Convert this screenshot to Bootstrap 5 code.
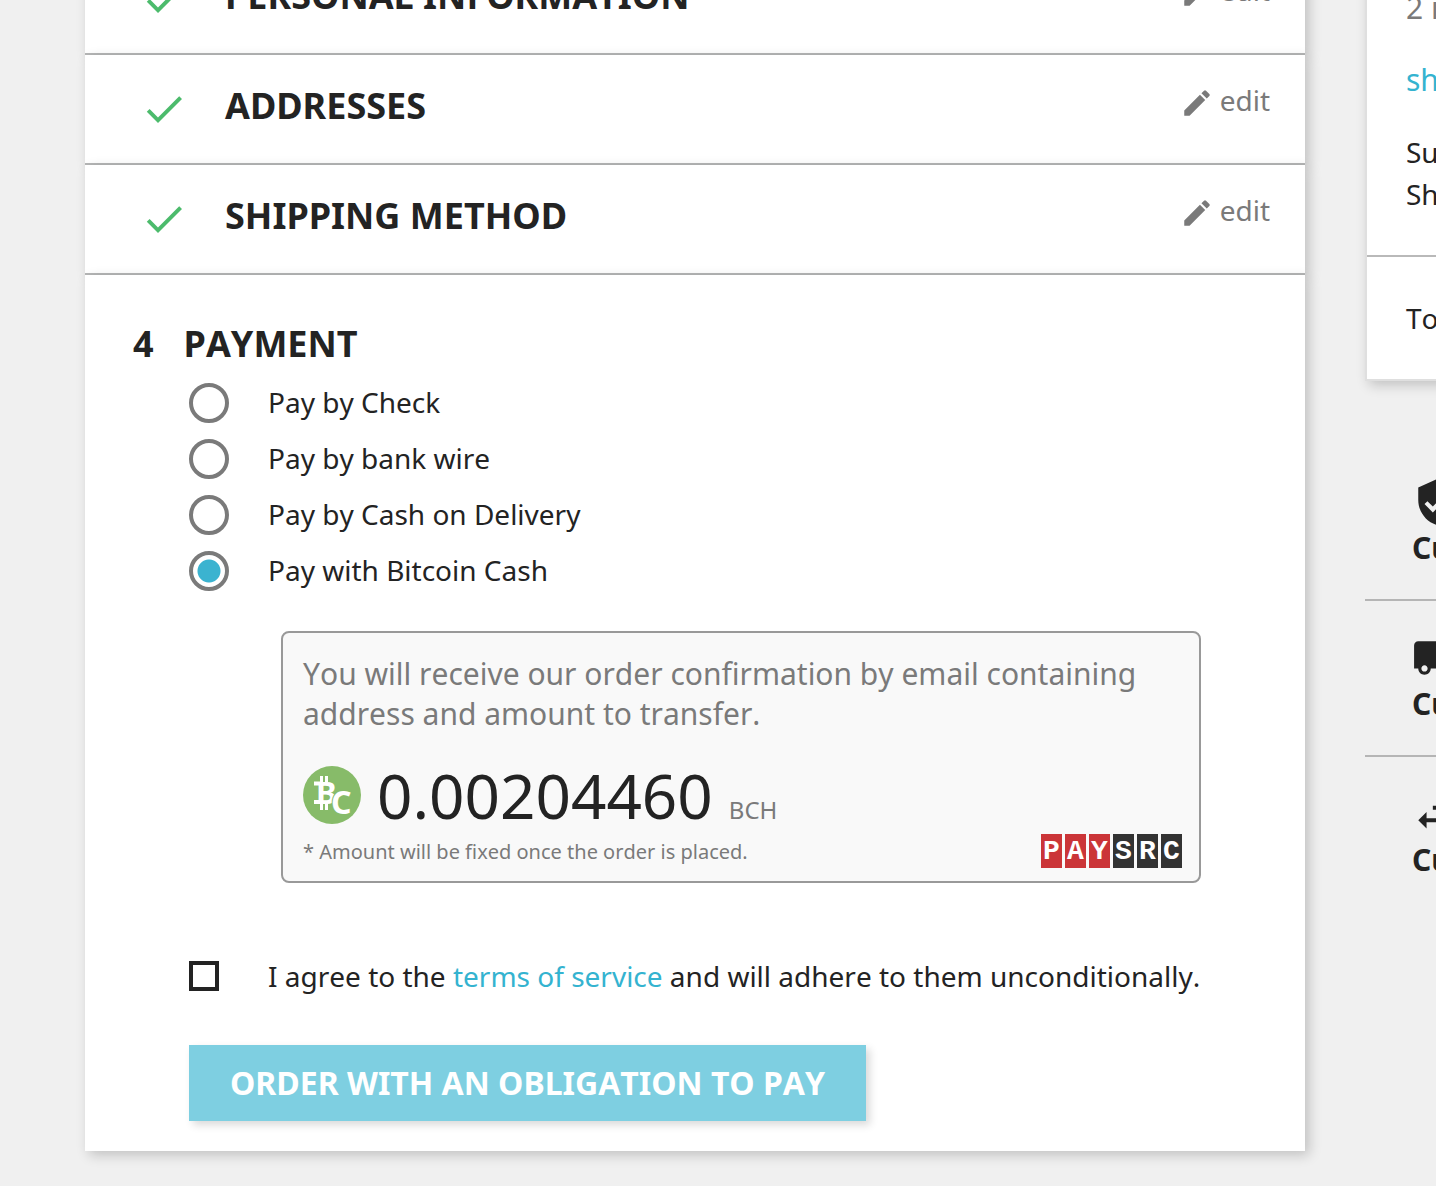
<!DOCTYPE html>
<html lang="en">
<head>
<meta charset="utf-8">
<meta name="viewport" content="width=device-width, initial-scale=1">
<title>Checkout</title>
<link href="https://cdn.jsdelivr.net/npm/bootstrap@5.3.0/dist/css/bootstrap.min.css" rel="stylesheet">
<style>
  body { background: #f0f0f0; color: #232323; font-family: "Noto Sans", sans-serif; font-size: 28px; line-height: 42px; font-kerning: none; overflow-x: hidden; }
  a { color: #34b3d0; text-decoration: none; }
  .checkout { padding-left: 85px; gap: 60px; overflow: hidden; }
  /* the page is scrolled into the first step */
  .checkout > * { margin-top: -55px; }
  .steps { flex: 1 1 0; min-width: 0; padding-bottom: 35px; }
  .step { background: #fff; box-shadow: 4px 4px 12px rgba(0,0,0,.2); }
  .step-done { border-bottom: 2px solid #b5b6b6; padding: 25px 35px 30px 55px; }
  .step-title { font-size: 36px; line-height: 52px; font-weight: 700; margin: 0; }
  .step-done .step-title { margin-left: 37px; }
  .tick { width: 48px; height: 48px; fill: #4cbb6c; margin-top: 5px; flex: none; }
  .edit-link { color: #7a7a7a; line-height: 40px; gap: 6px; }
  .edit-link svg { width: 34px; height: 34px; fill: #7a7a7a; margin-top: 6px; }
  .step-open { padding: 43px 104px 30px 48px; }
  .step-open .step-title { gap: 30px; }
  .step-body { padding-left: 56px; }
  .options { gap: 16px; margin-top: 13px; }
  .option { gap: 39px; line-height: 38px; }
  .option input { appearance: none; width: 40px; height: 40px; margin: 0; flex: none; border: 4px solid #7a7a7a; border-radius: 50%; background: #fff; }
  .option input:checked { background: radial-gradient(circle, #3bb3d0 11px, #fff 12px) center; }
  .coin-box { margin: 40px 0 0 92px; padding: 21px 17px 13px 20px; border: 2px solid #999; border-radius: 8px; background: #f9f9f9; color: #7a7a7a; }
  .coin-box p { font-size: 30px; line-height: 40px; margin: 0; }
  .coin-sum { margin-top: 32px; gap: 16px; }
  .coin-sum svg { width: 58px; height: 58px; flex: none; }
  .sum-value { font-size: 62px; line-height: 58px; color: #232323; }
  .sum-unit { font-size: 24px; line-height: 24px; }
  .coin-foot { margin-top: 10px; font-size: 20px; line-height: 27px; }
  .paysrc { gap: 3px; }
  .paysrc span { width: 21px; height: 34px; background: #cb3538; color: #fff; font: 700 28px/36px "Liberation Mono", monospace; display: flex; justify-content: center; }
  .paysrc span:nth-child(n+4) { background: #333; }
  .terms { margin-top: 72px; gap: 49px; white-space: nowrap; }
  .terms input { appearance: none; width: 30px; height: 30px; margin: 0; flex: none; border: 4px solid #232323; background: #fff; }
  .btn-order { margin-top: 48px; height: 76px; padding: 0 41px; border: 0; border-radius: 0; background: #7ecfe1; color: #fff; font-size: 32px; font-weight: 700; font-kerning: none; box-shadow: 4px 4px 8px rgba(0,0,0,.15); }
  /* the summary column runs past the right edge of the window */
  .summary { flex: 0 0 71px; min-width: 0; white-space: nowrap; }
  .summary-card { width: 600px; background: #fff; border: 2px solid #dfdfdf; box-shadow: 4px 4px 12px rgba(0,0,0,.2); }
  .summary-part { padding: 40px 39px; }
  .summary-part + .summary-part { border-top: 2px solid #b9b9b9; }
  .summary-lead { font-size: 30px; line-height: 41px; }
  .count { color: #7a7a7a; margin-bottom: 31px; }
  .details { margin-bottom: 31px; }
  .promises { margin-top: 64px; width: 600px; }
  .promise { padding: 32px 47px 31px; border-bottom: 2px solid #b5b5b5; font-size: 30px; line-height: 41px; font-weight: 700; }
  .promise:last-child { border-bottom: 0; }
  .promise svg { width: 50px; height: 50px; fill: #232323; display: block; }
</style>
<script src="https://cdn.jsdelivr.net/npm/bootstrap@5.3.0/dist/js/bootstrap.bundle.min.js"></script>
</head>
<body>
<svg class="d-none">
  <symbol id="tick" viewBox="0 0 24 24"><path d="M9 16.2L4.8 12l-1.4 1.4L9 19 21 7l-1.4-1.4L9 16.2z"/></symbol>
  <symbol id="pencil" viewBox="0 0 24 24"><path d="M3 17.25V21h3.75L17.81 9.94l-3.75-3.75L3 17.25zM20.71 7.04a1 1 0 0 0 0-1.41l-2.34-2.34a1 1 0 0 0-1.41 0l-1.83 1.83 3.75 3.75 1.83-1.83z"/></symbol>
</svg>
<div class="checkout d-flex align-items-start">
  <main class="steps">
    <section class="step step-done d-flex align-items-start">
      <svg class="tick"><use href="#tick"/></svg>
      <h1 class="step-title">PERSONAL INFORMATION</h1>
      <a href="#" class="edit-link d-flex ms-auto"><svg><use href="#pencil"/></svg>edit</a>
    </section>
    <section class="step step-done d-flex align-items-start">
      <svg class="tick"><use href="#tick"/></svg>
      <h1 class="step-title">ADDRESSES</h1>
      <a href="#" class="edit-link d-flex ms-auto"><svg><use href="#pencil"/></svg>edit</a>
    </section>
    <section class="step step-done d-flex align-items-start">
      <svg class="tick"><use href="#tick"/></svg>
      <h1 class="step-title">SHIPPING METHOD</h1>
      <a href="#" class="edit-link d-flex ms-auto"><svg><use href="#pencil"/></svg>edit</a>
    </section>
    <section class="step step-open">
      <h1 class="step-title d-flex"><span>4</span><span>PAYMENT</span></h1>
      <form class="step-body">
        <div class="options d-flex flex-column">
          <div class="option d-flex"><input type="radio" name="pay" id="pay-check"><label for="pay-check">Pay by Check</label></div>
          <div class="option d-flex"><input type="radio" name="pay" id="pay-wire"><label for="pay-wire">Pay by bank wire</label></div>
          <div class="option d-flex"><input type="radio" name="pay" id="pay-cod"><label for="pay-cod">Pay by Cash on Delivery</label></div>
          <div class="option d-flex"><input type="radio" name="pay" id="pay-bch" checked><label for="pay-bch">Pay with Bitcoin Cash</label></div>
        </div>
        <div class="coin-box">
          <p>You will receive our order confirmation by email containing address and amount to transfer.</p>
          <div class="coin-sum d-flex">
            <svg viewBox="0 0 58 58" aria-hidden="true">
              <circle cx="29" cy="29" r="29" fill="#87bb69"/>
              <g fill="#fff">
                <text x="13" y="38" font-family="Noto Sans, sans-serif" font-weight="700" font-size="31">B</text>
                <path d="M11 15.500h6v4h-6zM11 34h6v4h-6zM17 10h3v6h-3zM22 10h3v6h-3zM17 38h3v6h-3zM22 38h3v6h-3z"/>
                <text x="28" y="48" font-family="Noto Sans, sans-serif" font-weight="700" font-size="32" stroke="#87bb69" stroke-width="2" paint-order="stroke">C</text>
              </g>
            </svg>
            <div class="d-flex align-items-baseline gap-3">
              <span class="sum-value">0.00204460</span><span class="sum-unit">BCH</span>
            </div>
          </div>
          <div class="coin-foot d-flex align-items-center justify-content-between">
            <span>* Amount will be fixed once the order is placed.</span>
            <div class="paysrc d-flex"><span>P</span><span>A</span><span>Y</span><span>S</span><span>R</span><span>C</span></div>
          </div>
        </div>
        <div class="terms d-flex align-items-center">
          <input type="checkbox" id="agree">
          <label for="agree">I agree to the <a href="#">terms of service</a> and will adhere to them unconditionally.</label>
        </div>
        <button type="submit" class="btn btn-order d-block">ORDER WITH AN OBLIGATION TO PAY</button>
      </form>
    </section>
  </main>
  <aside class="summary">
    <div class="summary-card">
      <div class="summary-part">
        <div class="summary-lead count">2 items</div>
        <a href="#" class="summary-lead details d-block">show details</a>
        <div>Subtotal</div>
        <div>Shipping</div>
      </div>
      <div class="summary-part">Total</div>
    </div>
    <div class="promises">
      <div class="promise">
        <svg viewBox="0 0 24 24"><path d="M12 1L3 5v6c0 5.550 3.840 10.740 9 12 5.160-1.260 9-6.450 9-12V5l-9-4zm-2 16l-4-4 1.410-1.410L10 14.170l6.590-6.590L18 9l-8 8z"/></svg>
        Customer
      </div>
      <div class="promise">
        <svg viewBox="0 0 24 24"><path d="M20 8h-3V4H3c-1.100 0-2 .9-2 2v11h2c0 1.660 1.340 3 3 3s3-1.340 3-3h6c0 1.660 1.340 3 3 3s3-1.340 3-3h2v-5l-3-4zM6 18.500c-.83 0-1.500-.67-1.500-1.500s.67-1.500 1.500-1.500 1.500.67 1.500 1.500-.67 1.500-1.500 1.500zm13.500-9l1.960 2.500H17V9.500h2.500zM18 18.500c-.83 0-1.500-.67-1.500-1.500s.67-1.500 1.500-1.500 1.500.67 1.500 1.500-.67 1.500-1.500 1.500z"/></svg>
        Customer
      </div>
      <div class="promise">
        <svg viewBox="0 0 24 24"><path d="M6.990 11L3 15l3.990 4v-3H14v-2H6.990v-3zM21 9l-3.990-4v3H10v2h7.010v3L21 9z"/></svg>
        Customer
      </div>
    </div>
  </aside>
</div>
</body>
</html>
